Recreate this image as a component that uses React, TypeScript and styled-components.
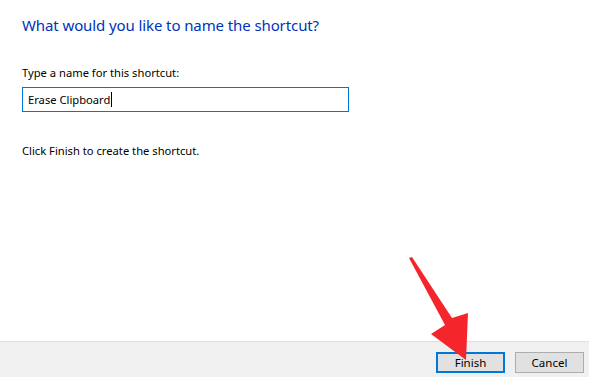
import React from "react";
import styled, { createGlobalStyle } from "styled-components";

const Global = createGlobalStyle`
  html, body { margin: 0; padding: 0; background: #ffffff; }
  body { font-family: "Noto Sans", "Open Sans", sans-serif; }
  #root { width: 589px; height: 377px; }
`;

const Window = styled.div`
  position: relative;
  width: 589px;
  height: 377px;
  display: flex;
  flex-direction: column;
  background: #ffffff;
  overflow: hidden;
`;

const Content = styled.div`
  flex: 1;
  display: flex;
  flex-direction: column;
  padding: 13px 0 0 22px;
`;

const Title = styled.h1`
  margin: 0;
  font-size: 15px;
  font-weight: 400;
  color: #0033bc;
  line-height: 24px;
  letter-spacing: -0.1px;
`;

const Label = styled.label`
  margin-top: 28px;
  font-size: 11.2px;
  color: #000000;
  line-height: 16px;
`;

const Input = styled.div`
  margin-top: 6px;
  box-sizing: border-box;
  width: 327px;
  height: 25px;
  border: 1px solid #0078d7;
  padding: 0 5px;
  display: flex;
  align-items: center;
  font-size: 11.2px;
  color: #000000;
`;

const Caret = styled.span`
  display: inline-block;
  width: 1px;
  height: 15px;
  background: #000000;
  margin-left: 1px;
`;

const Hint = styled.p`
  margin: 31px 0 0 0;
  font-size: 11.2px;
  line-height: 16px;
  color: #000000;
`;

const Footer = styled.div`
  box-sizing: border-box;
  height: 36px;
  background: #f0f0f0;
  border-top: 1px solid #dfdfdf;
  display: flex;
  justify-content: flex-end;
  align-items: flex-start;
  gap: 10px;
  padding: 10px 5px 0 0;
`;

const Button = styled.button<{ $primary?: boolean }>`
  box-sizing: border-box;
  width: 69px;
  height: 21px;
  padding: 0;
  background: #e1e1e1;
  border: ${(p) => (p.$primary ? "2px solid #0078d7" : "1px solid #adadad")};
  font-family: "Noto Sans", "Open Sans", sans-serif;
  font-size: 11.5px;
  color: #000000;
  line-height: 1;
`;

const Arrow = styled.svg`
  position: absolute;
  left: 0;
  top: 0;
  width: 589px;
  height: 377px;
  pointer-events: none;
`;

export default function App() {
  return (
    <Window>
      <Global />
      <Content>
        <Title>What would you like to name the shortcut?</Title>
        <Label>Type a name for this shortcut:</Label>
        <Input>
          Erase Clipboard<Caret />
        </Input>
        <Hint>Click Finish to create the shortcut.</Hint>
      </Content>
      <Footer>
        <Button $primary>Finish</Button>
        <Button>Cancel</Button>
      </Footer>
      <Arrow viewBox="0 0 589 377">
        <polygon
          points="409,258 412,257 452,318 468,313 466,360 431,334 445,325"
          fill="#f5262b"
        />
      </Arrow>
    </Window>
  );
}
